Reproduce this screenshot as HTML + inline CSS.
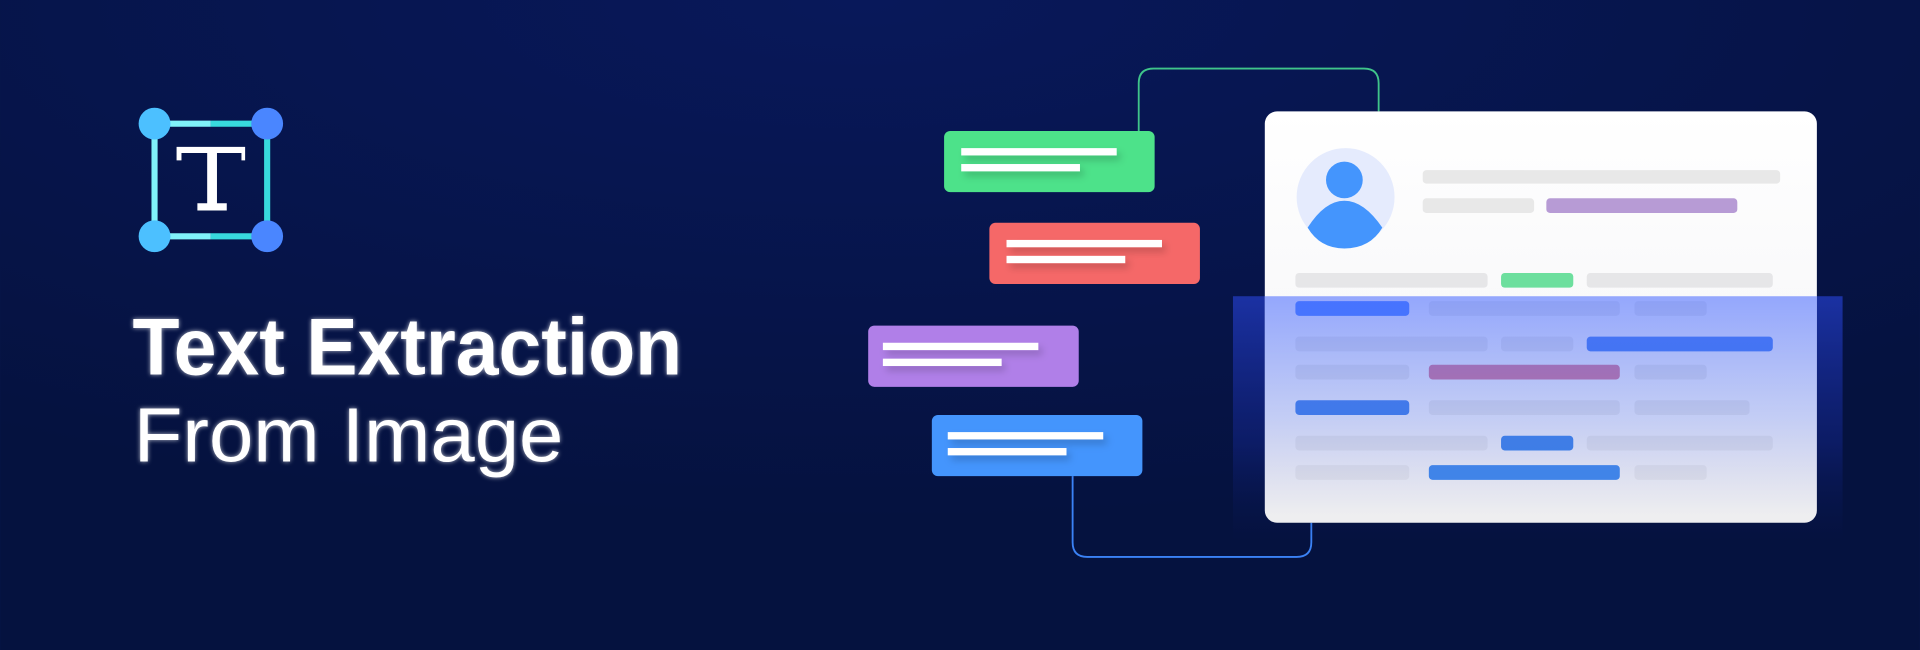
<!DOCTYPE html>
<html><head><meta charset="utf-8"><style>
html,body{margin:0;padding:0;background:#061548;}
svg{display:block}
</style></head><body>
<svg width="1920" height="650" viewBox="0 0 1568 531" xmlns="http://www.w3.org/2000/svg">
<defs>
<radialGradient id="bg" cx="0.45" cy="0" r="0.8">
<stop offset="0" stop-color="#08185a"/><stop offset="1" stop-color="#05123f"/>
</radialGradient>
<linearGradient id="ov" x1="0" y1="0" x2="0" y2="1">
<stop offset="0" stop-color="#5070ff" stop-opacity="0.6"/>
<stop offset="0.55" stop-color="#5070f0" stop-opacity="0.3"/>
<stop offset="1" stop-color="#5060d0" stop-opacity="0"/>
</linearGradient>
<linearGradient id="ov2" x1="0" y1="0" x2="0" y2="1">
<stop offset="0" stop-color="#1c33a8" stop-opacity="0.95"/>
<stop offset="0.6" stop-color="#13258a" stop-opacity="0.5"/>
<stop offset="1" stop-color="#0a1a60" stop-opacity="0"/>
</linearGradient>
<linearGradient id="cardg" x1="0" y1="0" x2="0" y2="1">
<stop offset="0" stop-color="#ffffff"/><stop offset="0.7" stop-color="#f6f6f8"/><stop offset="1" stop-color="#eeeef0"/>
</linearGradient>
<linearGradient id="redl" x1="0" x2="1"><stop offset="0" stop-color="#f56868"/><stop offset="1" stop-color="#f56868" stop-opacity="0.1"/></linearGradient>
<linearGradient id="purl" x1="0" x2="1"><stop offset="0" stop-color="#b07fe8"/><stop offset="1" stop-color="#b07fe8" stop-opacity="0.1"/></linearGradient>
<filter id="glow" x="-10%" y="-30%" width="120%" height="160%">
<feGaussianBlur stdDeviation="2" result="b"/>
<feComponentTransfer in="b" result="b2"><feFuncA type="linear" slope="0.7"/></feComponentTransfer>
<feMerge><feMergeNode in="b2"/><feMergeNode in="SourceGraphic"/></feMerge>
</filter>
<filter id="sh" x="-20%" y="-50%" width="140%" height="250%"><feDropShadow dx="3" dy="4" stdDeviation="3" flood-color="#000" flood-opacity="0.18"/></filter>
</defs>
<rect width="1568" height="531" fill="url(#bg)"/>

<!-- icon -->
<line x1="126" y1="101" x2="172" y2="101" stroke="#80f2f9" stroke-width="5"/>
<line x1="172" y1="101" x2="218" y2="101" stroke="#38d9dd" stroke-width="5"/>
<line x1="126" y1="193" x2="172" y2="193" stroke="#80f2f9" stroke-width="5"/>
<line x1="172" y1="193" x2="218" y2="193" stroke="#38d9dd" stroke-width="5"/>
<line x1="126" y1="101" x2="126" y2="193" stroke="#80f2f9" stroke-width="5"/>
<line x1="218" y1="101" x2="218" y2="193" stroke="#38d9dd" stroke-width="5"/>
<circle cx="126" cy="101" r="13" fill="#4cc0ff"/>
<circle cx="126" cy="193" r="13" fill="#4cc0ff"/>
<circle cx="218" cy="101" r="13" fill="#4a86ff"/>
<circle cx="218" cy="193" r="13" fill="#4a86ff"/>
<path fill="#fff" d="M144 120h56v11h-3v-6h-20v41h8v6h-24v-6h8v-41h-21v6h-4z"/>

<g filter="url(#glow)" fill="#fff">
<text x="108" y="306" font-family="Liberation Sans, sans-serif" font-weight="700" font-size="66" textLength="449" lengthAdjust="spacingAndGlyphs">Text Extraction</text>
<text x="109" y="377" font-family="Liberation Sans, sans-serif" font-size="63" textLength="351" lengthAdjust="spacingAndGlyphs">From Image</text>
</g>

<!-- connectors -->
<path d="M930 107V68q0-12 12-12h172q12 0 12 12v23" fill="none" stroke="#3fc48a" stroke-width="1.5"/>
<path d="M876 389v54q0 12 12 12h171q12 0 12-12v-16" fill="none" stroke="#3b82f6" stroke-width="1.5"/>
<line x1="980" y1="205" x2="1033" y2="205" stroke="url(#redl)" stroke-width="1.5"/>
<line x1="881" y1="287" x2="1007" y2="287" stroke="url(#purl)" stroke-width="1.5"/>

<!-- cards -->
<rect x="771" y="107" width="172" height="50" rx="5" fill="#4de28a"/>
<rect x="808" y="182" width="172" height="50" rx="5" fill="#f56868"/>
<rect x="709" y="266" width="172" height="50" rx="5" fill="#b07fe8"/>
<rect x="761" y="339" width="172" height="50" rx="5" fill="#4495fd"/>
<g fill="#fff" filter="url(#sh)">
<rect x="785" y="121" width="127" height="6"/><rect x="785" y="134" width="97" height="6"/>
<rect x="822" y="196" width="127" height="6"/><rect x="822" y="209" width="97" height="6"/>
<rect x="721" y="280" width="127" height="6"/><rect x="721" y="293" width="97" height="6"/>
<rect x="774" y="353" width="127" height="6"/><rect x="774" y="366" width="97" height="6"/>
</g>

<!-- overlay outside card -->
<rect x="1007" y="242" width="498" height="200" fill="url(#ov2)"/>

<!-- main card -->
<rect x="1033" y="91" width="451" height="336" rx="10" fill="url(#cardg)"/>
<circle cx="1099" cy="161" r="40" fill="#e5ebfd"/>
<ellipse cx="1098" cy="147" rx="15" ry="15" fill="#4495fd"/>
<path d="M1068 186q14-22 30-22q16 0 31 22q-10 17-31 17q-20 0-30-17z" fill="#4495fd"/>
<g fill="#e8e8e8">
<rect x="1162" y="139" width="292" height="11" rx="3"/>
<rect x="1162" y="162" width="91" height="12" rx="3"/>
</g>
<rect x="1263" y="162" width="156" height="12" rx="3" fill="#b79bd5"/>
<g fill="#e6e6e8">
<rect x="1058" y="223" width="157" height="12" rx="3"/><rect x="1296" y="223" width="152" height="12" rx="3"/>
<rect x="1167" y="246" width="156" height="12" rx="3"/><rect x="1335" y="246" width="59" height="12" rx="3"/>
<rect x="1058" y="275" width="157" height="12" rx="3"/><rect x="1226" y="275" width="59" height="12" rx="3"/>
<rect x="1058" y="298" width="93" height="12" rx="3"/><rect x="1335" y="298" width="59" height="12" rx="3"/>
<rect x="1167" y="327" width="156" height="12" rx="3"/><rect x="1335" y="327" width="94" height="12" rx="3"/>
<rect x="1058" y="356" width="157" height="12" rx="3"/><rect x="1296" y="356" width="152" height="12" rx="3"/>
<rect x="1058" y="380" width="93" height="12" rx="3"/><rect x="1335" y="380" width="59" height="12" rx="3"/>
</g>
<rect x="1226" y="223" width="59" height="12" rx="3" fill="#6ddf9e"/>
<rect x="1058" y="246" width="93" height="12" rx="3" fill="#3b78ff"/>
<rect x="1296" y="275" width="152" height="12" rx="3" fill="#3a77ee"/>
<rect x="1167" y="298" width="156" height="12" rx="3" fill="#d8708c"/>
<rect x="1058" y="327" width="93" height="12" rx="3" fill="#3a7de6"/>
<rect x="1226" y="356" width="59" height="12" rx="3" fill="#3a82e6"/>
<rect x="1167" y="380" width="156" height="12" rx="3" fill="#3e88ea"/>
<rect x="1033" y="242" width="451" height="180" fill="url(#ov)"/>
</svg>
</body></html>
